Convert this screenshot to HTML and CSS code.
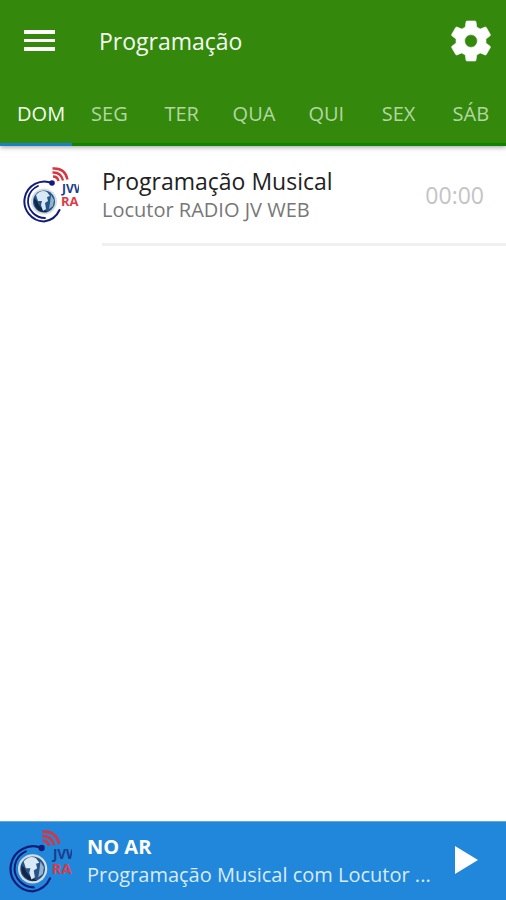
FILE: index.html
```html
<!DOCTYPE html>
<html lang="pt-BR">
<head>
<meta charset="utf-8">
<meta name="viewport" content="width=device-width, initial-scale=1">
<title>Programação</title>
<link rel="stylesheet" href="styles.css">
</head>
<body>
<svg class="defs" aria-hidden="true">
  <symbol id="logo" viewBox="0 1 56 56">
    <g fill="none" stroke="#111d78" stroke-linecap="round">
      <path stroke-width="2" d="M29 17A20 20 0 1 0 21 55.500Q32 54 36.500 44"/>
      <path stroke-width="1.800" d="M15 20A16.500 16.500 0 0 0 10 47Q15 52 22 52"/>
    </g>
    <circle cx="29" cy="17" r="2.800" fill="#111d78"/>
    <circle cx="21" cy="35.500" r="13" fill="#d5dde5"/>
    <circle cx="21" cy="35.500" r="11" fill="#285587"/>
    <path fill="#122747" d="M11 32Q10 41 17 45Q21 47 25 46Q16 42 14 35Z"/>
    <path fill="#d9e9f5" d="M13 29Q18 23 24 26L27 30L24 31L25 35L22 37L23 43L20 45L18 39L19 35L15 35Z"/>
    <path fill="#91b4d1" d="M28 29L31 34L30 40L26 43L27 37Z"/>
    <g fill="none" stroke="#d8363f" stroke-width="2.400">
      <path d="M30 10.500Q34.500 10.500 35.500 15"/>
      <path d="M29.500 6.500Q38 6 40 14.500"/>
      <path d="M29.500 2.500Q42 1.500 44.500 13.500"/>
    </g>
    <g class="logo-text">
      <text x="39" y="27" font-size="12" fill="#1c3c8c">JVW</text>
      <text x="38" y="40" font-size="13" fill="#dc3c48">RA</text>
    </g>
  </symbol>
</svg>
<div class="app">
  <header class="header">
    <div class="toolbar">
      <button class="icon-button" type="button" aria-label="Menu">
        <svg class="menu-icon" viewBox="0 0 32 24" fill="#fff"><path d="M0 1h31v4H0zM0 10h31v3H0zM0 18h31v4H0z"/></svg>
      </button>
      <h1 class="title">Programação</h1>
      <button class="icon-button" type="button" aria-label="Configurações">
        <svg class="gear-icon" viewBox="1.500 1.500 21 21" fill="#fff" stroke="#fff" stroke-width=".3" stroke-linejoin="round"><path d="M19.430 12.980c.04-.32.070-.64.070-.98s-.03-.66-.07-.98l2.110-1.650c.19-.15.240-.42.120-.64l-2-3.460c-.12-.22-.39-.3-.61-.22l-2.490 1c-.52-.4-1.080-.73-1.690-.98l-.38-2.650C14.460 2.180 14.250 2 14 2h-4c-.25 0-.46.180-.49.420l-.38 2.650c-.61.250-1.170.590-1.690.980l-2.490-1c-.23-.09-.49 0-.61.220l-2 3.460c-.13.220-.07.490.120.640l2.110 1.650c-.04.320-.07.650-.07.980s.03.660.070.980l-2.110 1.650c-.19.150-.24.420-.12.640l2 3.460c.12.220.390.300.610.220l2.490-1c.52.400 1.080.730 1.690.980l.38 2.650c.03.240.240.420.490.420h4c.25 0 .46-.18.490-.42l.38-2.650c.61-.25 1.170-.59 1.690-.98l2.490 1c.23.090.490 0 .610-.22l2-3.460c.12-.22.070-.49-.12-.64l-2.110-1.650zM12 15.200a3.200 3.200 0 1 1 0-6.400 3.200 3.200 0 0 1 0 6.400z"/></svg>
      </button>
    </div>
    <nav class="tabs">
      <button class="tab active" type="button" aria-current="true">DOM</button>
      <button class="tab" type="button">SEG</button>
      <button class="tab" type="button">TER</button>
      <button class="tab" type="button">QUA</button>
      <button class="tab" type="button">QUI</button>
      <button class="tab" type="button">SEX</button>
      <button class="tab" type="button">SÁB</button>
    </nav>
  </header>
  <main class="schedule">
    <article class="program">
      <svg class="program-logo" role="img" aria-label="Rádio JV Web"><use href="#logo"/></svg>
      <div class="program-body">
        <div class="program-text">
          <h2 class="program-name">Programação Musical</h2>
          <p class="program-host">Locutor RADIO JV WEB</p>
        </div>
        <time class="program-time">00:00</time>
      </div>
    </article>
  </main>
  <footer class="player">
    <svg class="player-logo" role="img" aria-label="Rádio JV Web"><use href="#logo"/></svg>
    <div class="player-text">
      <strong class="player-status">NO AR</strong>
      <span class="player-track">Programação Musical com Locutor ...</span>
    </div>
    <button class="icon-button" type="button" aria-label="Reproduzir">
      <svg class="play-icon" viewBox="0 0 24 30" fill="#fff"><path d="M1 0L24 14L1 28Z"/></svg>
    </button>
  </footer>
</div>
</body>
</html>
```
FILE: styles.css
```css
* {
  box-sizing: border-box;
}

body {
  margin: 0;
  background: #fff;
  font-family: "Open Sans", "Noto Sans", sans-serif;
}

h1, h2, p {
  margin: 0;
  font-weight: 400;
}

button {
  padding: 0;
  border: 0;
  background: none;
  font: inherit;
  cursor: pointer;
}

svg {
  display: block;
}

.defs {
  position: absolute;
  width: 0;
  height: 0;
}

.logo-text {
  font-family: "Open Sans", sans-serif;
  font-weight: 700;
}

.app {
  display: flex;
  flex-direction: column;
  min-height: 100vh;
}

.header {
  background: #34890c;
  box-shadow: 0 1px 5px rgba(0, 0, 0, 0.4);
}

.toolbar {
  display: flex;
  align-items: center;
  height: 82px;
  padding: 0 14px 0 24px;
}

.icon-button {
  flex: none;
}

.menu-icon {
  width: 32px;
  height: 24px;
}

.gear-icon {
  width: 42px;
  height: 42px;
}

.title {
  flex: 1;
  padding-left: 43px;
  color: #f5fbf2;
  font-size: 23px;
  line-height: 32px;
}

.tabs {
  display: grid;
  grid-template-columns: repeat(7, 1fr);
}

.tab {
  height: 64px;
  padding: 2px 0 0 2px;
  border-bottom: 3px solid #0f8400;
  color: #b3d6a3;
  font-size: 20px;
  line-height: 28px;
}

.tab.active {
  padding-left: 10px;
  border-color: #1b80c4;
  color: #f5fbf2;
  font-weight: 500;
}

.schedule {
  flex: 1;
}

.program {
  display: flex;
  padding-left: 23px;
}

.program-logo {
  width: 56px;
  height: 56px;
  margin: 21px 23px 0 0;
}

.program-body {
  display: flex;
  flex: 1;
  align-items: center;
  height: 100px;
  padding-right: 22px;
  border-bottom: 3px solid #f0f0f0;
}

.program-text {
  flex: 1;
}

.program-name {
  color: #222;
  font-size: 23px;
  line-height: 30px;
}

.program-host {
  color: #777;
  font-size: 20px;
  line-height: 28px;
}

.program-time {
  color: #c4c4c4;
  font-size: 23px;
  line-height: 32px;
}

.player {
  display: flex;
  align-items: center;
  height: 79px;
  padding: 0 28px 0 9px;
  border-top: 1px solid #65a9df;
  background: #2087da;
}

.player-logo {
  flex: none;
  width: 63px;
  height: 63px;
  margin-right: 15px;
}

.player-text {
  display: flex;
  flex: 1;
  flex-direction: column;
  min-width: 0;
  margin-right: 16px;
}

.player-status {
  color: #fff;
  font-size: 20px;
  line-height: 28px;
}

.player-track {
  overflow: hidden;
  color: #d9ebfa;
  font-size: 20px;
  line-height: 28px;
  text-overflow: ellipsis;
  white-space: nowrap;
}

.play-icon {
  width: 24px;
  height: 30px;
}
```
